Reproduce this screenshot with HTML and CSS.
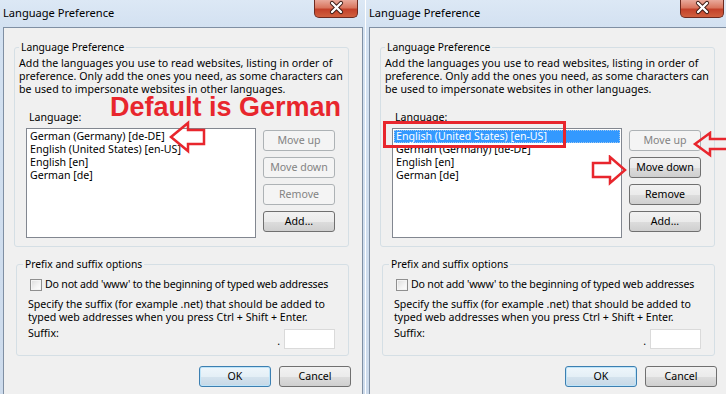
FILE: index.html
```html
<!DOCTYPE html>
<html>
<head>
<meta charset="utf-8">
<link rel="stylesheet" href="styles.css">
</head>
<body>
<div class="screen">
  <div class="dialog">
    <div class="titlebar">
      <span class="title">Language Preference</span>
      <div class="close"><svg width="44" height="18" viewBox="0 0 44 18"><path d="M18 4 L27 13 M27 4 L18 13" stroke="#3a1a14" stroke-width="4.2" stroke-linecap="round"/><path d="M18 4 L27 13 M27 4 L18 13" stroke="#fff" stroke-width="2.4" stroke-linecap="round"/></svg></div>
    </div>
    <div class="content">
      <fieldset class="group group-lang">
        <legend>Language Preference</legend>
        <p class="desc">Add the languages you use to read websites, listing in order of<br>preference. Only add the ones you need, as some characters can<br>be used to impersonate websites in other languages.</p>
        <div class="label-lang">Language:</div>
        <div class="lang-row">
          <div class="listbox">
            <div class="item">German (Germany) [de-DE]</div>
            <div class="item">English (United States) [en-US]</div>
            <div class="item">English [en]</div>
            <div class="item">German [de]</div>
          </div>
          <div class="btn-col">
            <div class="btn disabled">Move up</div>
            <div class="btn disabled">Move down</div>
            <div class="btn disabled">Remove</div>
            <div class="btn">Add...</div>
          </div>
        </div>
      </fieldset>
      <fieldset class="group group-prefix">
        <legend>Prefix and suffix options</legend>
        <div class="check-row"><span class="checkbox"></span>Do not add 'www' to the beginning of typed web addresses</div>
        <p class="desc2">Specify the suffix (for example .net) that should be added to<br>typed web addresses when you press Ctrl + Shift + Enter.</p>
        <div class="suffix-row"><span>Suffix:</span><span class="suffix-field"><span class="dot">.</span><span class="input"></span></span></div>
      </fieldset>
      <div class="footer"><div class="btn btn-default">OK</div><div class="btn">Cancel</div></div>
    </div>
    <div class="note-text">Default is German</div>
    <svg class="note-arrow arrow-a" width="44" height="40" viewBox="0 0 44 40"><polygon points="6,19 23,5 23,12 39,12 39,26 23,26 23,33" fill="none" stroke="#e8262d" stroke-width="2.5" stroke-linejoin="miter"/></svg>
  </div>

  <div class="dialog">
    <div class="titlebar">
      <span class="title">Language Preference</span>
      <div class="close"><svg width="44" height="18" viewBox="0 0 44 18"><path d="M18 4 L27 13 M27 4 L18 13" stroke="#3a1a14" stroke-width="4.2" stroke-linecap="round"/><path d="M18 4 L27 13 M27 4 L18 13" stroke="#fff" stroke-width="2.4" stroke-linecap="round"/></svg></div>
    </div>
    <div class="content">
      <fieldset class="group group-lang">
        <legend>Language Preference</legend>
        <p class="desc">Add the languages you use to read websites, listing in order of<br>preference. Only add the ones you need, as some characters can<br>be used to impersonate websites in other languages.</p>
        <div class="label-lang">Language:</div>
        <div class="lang-row">
          <div class="listbox">
            <div class="item selected">English (United States) [en-US]</div>
            <div class="item">German (Germany) [de-DE]</div>
            <div class="item">English [en]</div>
            <div class="item">German [de]</div>
          </div>
          <div class="btn-col">
            <div class="btn disabled">Move up</div>
            <div class="btn">Move down</div>
            <div class="btn">Remove</div>
            <div class="btn">Add...</div>
          </div>
        </div>
      </fieldset>
      <fieldset class="group group-prefix">
        <legend>Prefix and suffix options</legend>
        <div class="check-row"><span class="checkbox"></span>Do not add 'www' to the beginning of typed web addresses</div>
        <p class="desc2">Specify the suffix (for example .net) that should be added to<br>typed web addresses when you press Ctrl + Shift + Enter.</p>
        <div class="suffix-row"><span>Suffix:</span><span class="suffix-field"><span class="dot">.</span><span class="input"></span></span></div>
      </fieldset>
      <div class="footer"><div class="btn btn-default">OK</div><div class="btn">Cancel</div></div>
    </div>
    <div class="note-box"></div>
    <svg class="note-arrow arrow-b" width="40" height="30" viewBox="0 0 40 30"><polygon points="4,13 19,2 19,8 38,8 38,18 19,18 19,24" fill="none" stroke="#e8262d" stroke-width="2.5"/></svg>
    <svg class="note-arrow arrow-c" width="40" height="34" viewBox="0 0 40 34"><polygon points="4,8 21,8 21,2 36,15 21,28 21,22 4,22" fill="none" stroke="#e8262d" stroke-width="2.5"/></svg>
  </div>
</div>
</body>
</html>
```

FILE: styles.css
```css
html, body {
  margin: 0;
  padding: 0;
  background: #ffffff;
}
body {
  width: 726px;
  height: 394px;
  overflow: hidden;
  font-family: "Noto Sans", "Open Sans", sans-serif;
  font-size: 10.6px;
  color: #000;
}
.screen {
  display: flex;
  width: 732px;
  height: 394px;
}
.dialog {
  position: relative;
  flex: none;
  width: 366px;
  height: 394px;
  box-sizing: border-box;
  padding: 0 2px 0 3px;
  border-right: 1px solid #ffffff;
  background: linear-gradient(180deg, #dce8f5 0px, #d3e1f1 27px, #cddbec 394px);
  display: flex;
  flex-direction: column;
}
.titlebar {
  flex: none;
  height: 27px;
  display: flex;
  align-items: flex-start;
  margin-left: -3px;
  padding-left: 3px;
}
.title {
  font-size: 11.1px;
  line-height: 25px;
  color: #000;
}
.close {
  margin-left: auto;
  margin-right: 5px;
  width: 44px;
  height: 18px;
  box-sizing: border-box;
  border: 1px solid #6d2a20;
  border-top: none;
  border-radius: 0 0 5px 5px;
  background: linear-gradient(180deg, #e9a99b 0%, #d9765f 45%, #c3412a 55%, #d0603f 100%);
  overflow: hidden;
}
.close svg {
  display: block;
  margin: -1px 0 0 -1px;
}
.content {
  flex: 1;
  background: #f0f0f0;
  border: 1px solid #7f8fa3;
  border-bottom: none;
  display: flex;
  flex-direction: column;
}
.group {
  margin: 0;
  border: 1px solid #d5dfe5;
  border-radius: 3px;
  min-width: 0;
}
.group legend {
  padding: 0 2px;
  line-height: 14px;
  font-size: 10.3px;
}
.group-lang {
  margin: 12px 13px 0 10px;
  padding: 3px 4px 8px 4px;
}
.desc, .desc2 {
  margin: 0;
  line-height: 13px;
  white-space: nowrap;
}
.desc {
  letter-spacing: 0.05px;
}
.label-lang {
  margin: 15px 0 0 10px;
  line-height: 13px;
}
.lang-row {
  display: flex;
  margin: 4px 0 0 7px;
  gap: 7px;
}
.listbox {
  width: 230px;
  height: 110px;
  box-sizing: border-box;
  background: #fff;
  border: 1px solid #828790;
  padding: 1px 1px;
}
.item {
  line-height: 13px;
  padding-left: 2px;
  white-space: nowrap;
}
.item.selected {
  background: #3399ff;
  color: #fff;
  outline: 1px dotted #a0c8f0;
  outline-offset: -1px;
}
.btn-col {
  display: flex;
  flex-direction: column;
  gap: 6px;
  margin-top: 2px;
}
.btn {
  width: 72px;
  height: 21px;
  box-sizing: border-box;
  border: 1px solid #707070;
  border-radius: 3px;
  background: linear-gradient(180deg, #f2f2f2 0%, #ebebeb 50%, #dddddd 51%, #cfcfcf 100%);
  display: flex;
  align-items: center;
  justify-content: center;
  line-height: 13px;
  color: #000;
}
.btn.disabled {
  border-color: #adb2b5;
  background: #f4f4f4;
  color: #838383;
}
.btn-default {
  border-color: #3c7fb1;
  box-shadow: inset 0 0 0 1px #bfe4f8;
  background: linear-gradient(180deg, #eef6fb 0%, #e4eff6 50%, #d4e3ee 51%, #c6d8e6 100%);
}
.group-prefix {
  margin: 10px 13px 0 12px;
  padding: 7px 13px 6px 11px;
}
.group-prefix legend {
  margin-left: -5px;
}
.check-row {
  display: flex;
  align-items: center;
  line-height: 13px;
  white-space: nowrap;
  margin-left: 2px;
  letter-spacing: -0.2px;
}
.checkbox {
  flex: none;
  width: 12px;
  height: 12px;
  box-sizing: border-box;
  border: 1px solid #8f8f8f;
  background: linear-gradient(135deg, #dcdcdc 0%, #f4f4f4 60%, #ffffff 100%);
  box-shadow: inset 0 0 0 1px #f4f4f4;
  margin-right: 3px;
}
.desc2 {
  margin-top: 7px;
}
.suffix-row {
  display: flex;
  justify-content: space-between;
  align-items: flex-start;
  margin-top: 3px;
  line-height: 13px;
}
.suffix-field {
  display: flex;
  align-items: flex-end;
  margin-top: 2px;
}
.dot {
  line-height: 13px;
  margin-right: 4px;
  margin-bottom: 1px;
}
.input {
  width: 51px;
  height: 20px;
  box-sizing: border-box;
  background: #fff;
  border: 1px solid #dadada;
}
.footer {
  display: flex;
  justify-content: flex-end;
  gap: 8px;
  margin-top: 10px;
  padding-right: 11px;
}
.note-text {
  position: absolute;
  left: 110px;
  top: 97px;
  font-family: "Liberation Sans", Arial, sans-serif;
  font-weight: bold;
  font-size: 27px;
  line-height: 20px;
  color: #e8262d;
  white-space: nowrap;
}
.note-arrow {
  position: absolute;
}
.arrow-a {
  left: 165px;
  top: 118px;
}
.note-box {
  position: absolute;
  left: 17px;
  top: 121px;
  width: 183px;
  height: 27px;
  box-sizing: border-box;
  border: 3px solid #e8262d;
}
.arrow-b {
  left: 325px;
  top: 131px;
}
.arrow-c {
  left: 223px;
  top: 155px;
}
```
